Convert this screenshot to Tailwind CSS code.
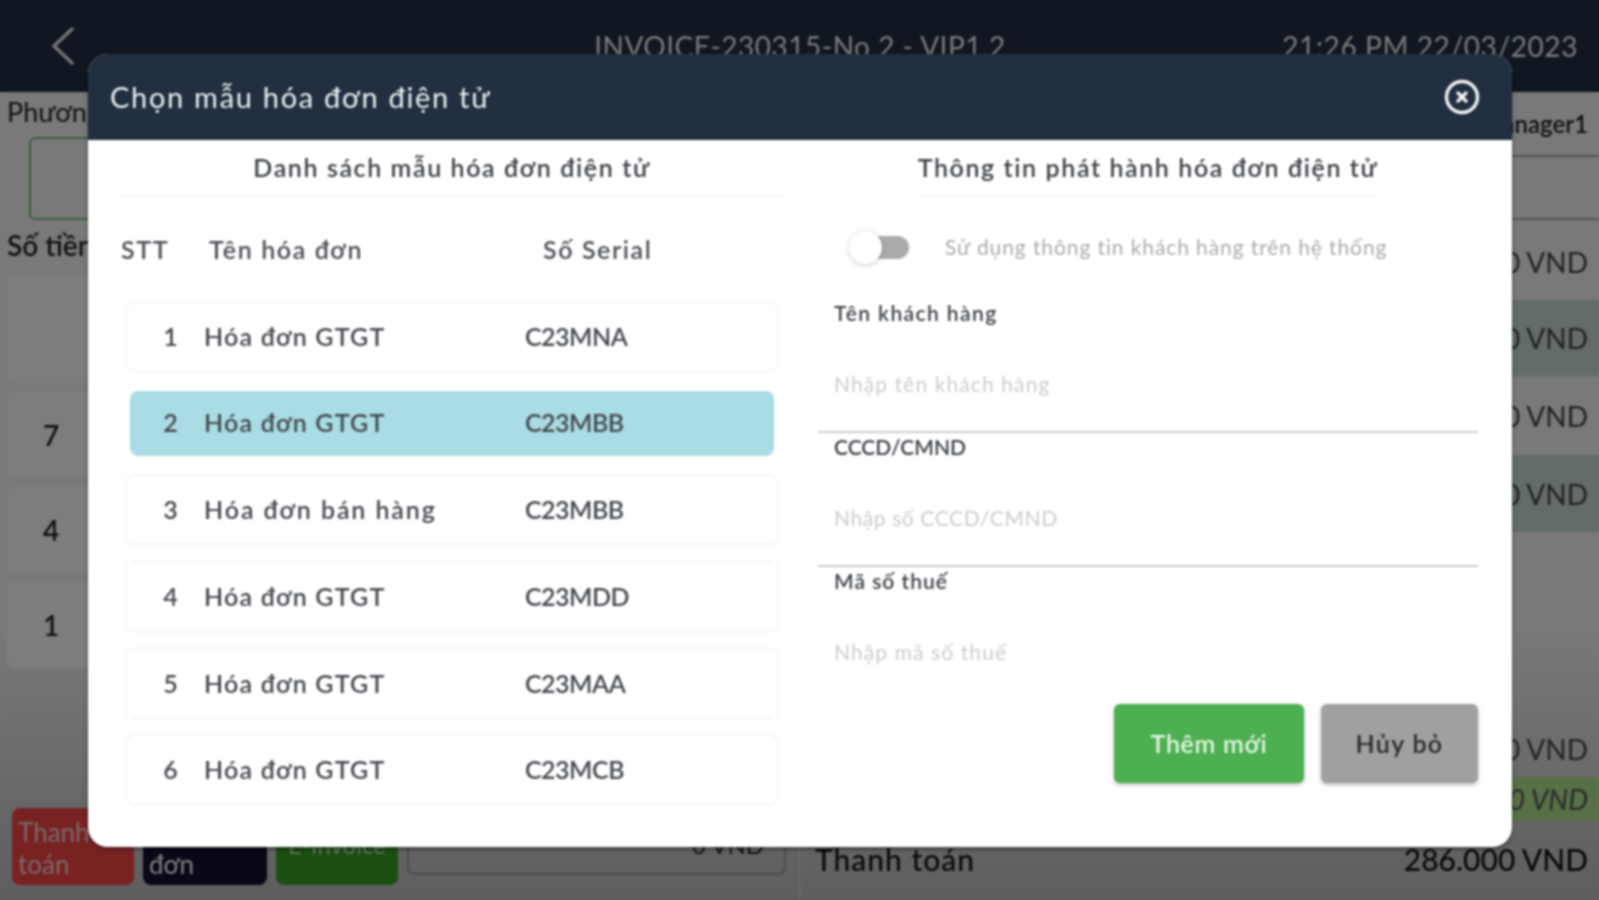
<!DOCTYPE html>
<html lang="vi">
<head>
<meta charset="utf-8">
<title>Chọn mẫu hóa đơn điện tử</title>
<script src="https://cdn.jsdelivr.net/npm/@tailwindcss/browser@4"></script>
</head>
<body class="m-0 overflow-hidden bg-[linear-gradient(#10161e_92px,#7a7a7a_92px,#7a7a7a_75%,#5e5e5e)]">
<div class="relative flex h-[900px] w-[1599px] flex-col overflow-hidden bg-gradient-to-b from-[#f2f2f2] from-[70%] to-[#bcbcbc] font-['Lato',sans-serif] text-[#222] blur-[0.9px]">
  <!-- app bar -->
  <header class="flex h-[92px] shrink-0 items-center bg-[#212f40] pl-[50px] pr-[21px] text-[28px] text-[#f2f2f2]">
    <div class="flex-1">
      <svg class="h-[38px] w-[26px]" viewBox="0 0 26 38" fill="none" stroke="#e8e8e8" stroke-width="3.5" stroke-linecap="round" stroke-linejoin="round"><path d="M22 2 4 19l18 17"/></svg>
    </div>
    <div class="mr-[28px] tracking-[0.5px]">INVOICE-230315-No 2 - VIP1.2</div>
    <div class="flex-1 text-right tracking-[0.6px]">21:26 PM 22/03/2023</div>
  </header>
  <main class="flex min-h-0 flex-1">
    <!-- left column -->
    <section class="flex w-[800px] shrink-0 flex-col border-r border-[#ddd] pl-[7px]">
      <div class="h-[45px] w-[81px] overflow-hidden whitespace-nowrap pt-[2px] text-[27px] leading-[36px]">Phương thức thanh toán</div>
      <div class="ml-[22px] h-[83px] w-[220px] rounded-md border-2 border-[#7fbf7f]"></div>
      <div class="h-[55px] w-[81px] overflow-hidden whitespace-nowrap text-[28px] font-semibold leading-[50px]">Số tiền</div>
      <div class="flex w-[100px] flex-col gap-[8px] text-[28px] font-semibold">
        <div class="h-[108px] rounded-lg bg-[#fafafa]"></div>
        <div class="flex h-[87px] items-center rounded-lg bg-[#fafafa] pl-[36px]">7</div>
        <div class="flex h-[87px] items-center rounded-lg bg-[#fafafa] pl-[36px]">4</div>
        <div class="flex h-[87px] items-center rounded-lg bg-[#fafafa] pl-[36px]">1</div>
      </div>
      <div class="mt-auto flex gap-[9px] pb-[15px] pl-[5px] text-[26px] leading-[32px]">
        <div class="h-[77px] w-[122px] rounded-lg bg-[#f04444] px-[6px] pt-[8px] text-[#f4d0d0]">Thanh toán</div>
        <div class="h-[77px] w-[124px] rounded-lg bg-[#10102c] px-[6px] pt-[8px] text-white">Hóa<br>đơn</div>
        <div class="flex h-[77px] w-[122px] justify-center rounded-lg bg-[#349e20] pt-[21px] text-[24px] text-[#cfe8c8]">E-Invoice</div>
        <div class="flex h-[67px] w-[379px] justify-end rounded-lg border-2 border-[#999] pr-[20px] pt-[19px] text-[24px]">0 VND</div>
      </div>
    </section>
    <!-- right column -->
    <section class="flex min-w-0 flex-1 flex-col text-[28px]">
      <div class="flex h-[65px] items-center justify-end border-b-2 border-[#aaa] pr-[11px] text-[24px] font-semibold">Manager1</div>
      <div class="h-[63px] border-b-2 border-[#aaa]"></div>
      <div class="mt-[3px] flex h-[77px] items-center justify-end pr-[11px] text-[#444]">0 VND</div>
      <div class="flex h-[76px] items-center justify-end bg-[#c6d6d6] pr-[11px] text-[#444]">0 VND</div>
      <div class="flex h-[79px] items-center justify-end pr-[11px] text-[#444]">0 VND</div>
      <div class="flex h-[77px] items-center justify-end bg-[#c6d6d6] pr-[11px] text-[#444]">0 VND</div>
      <div class="flex-1"></div>
      <div class="flex h-[65px] items-center justify-end pr-[11px] pt-[8px] text-[#444]">0 VND</div>
      <div class="flex h-[43px] items-center justify-end bg-[#aee08c] pr-[11px] italic text-[#555]">0 VND</div>
      <div class="flex h-[80px] items-start justify-between pl-[15px] pr-[11px] pt-[21px] text-[30px] font-medium leading-[36px] text-[#111]">
        <span class="tracking-[1px]">Thanh toán</span><span>286.000 VND</span>
      </div>
    </section>
  </main>
  <!-- scrim -->
  <div class="absolute inset-0 bg-black/50"></div>
  <!-- dialog -->
  <div class="absolute left-[88px] top-[54px] flex h-[793px] w-[1424px] flex-col overflow-hidden rounded-[20px] bg-white shadow-[0_2px_4px_rgba(0,0,0,0.4)]">
    <div class="flex h-[86px] shrink-0 items-center justify-between bg-[#212f40] pl-[22px] pr-[32px] text-[29px] tracking-[1.7px] text-[#eef1f4]">
      <span>Chọn mẫu hóa đơn điện tử</span>
      <svg class="h-[36px] w-[36px]" viewBox="0 0 36 36" fill="none" stroke="#f2f4f6" stroke-width="3.4" stroke-linecap="round"><circle cx="18" cy="18" r="15.5"/><path d="m14 14 8 8M22 14l-8 8"/></svg>
    </div>
    <div class="flex min-h-0 flex-1">
      <!-- template list -->
      <div class="w-[712px] shrink-0">
        <div class="ml-[34px] mr-[18px] flex h-[57px] items-center justify-center border-b-2 border-[#f6f6f6] text-[25px] font-semibold tracking-[1.6px] text-[#3c4046]">Danh sách mẫu hóa đơn điện tử</div>
        <div class="flex h-[106px] items-center pl-[33px] text-[25px] font-semibold tracking-[1.6px] text-[#4a4e54]">
          <span class="w-[88px]">STT</span><span class="w-[334px]">Tên hóa đơn</span><span>Số Serial</span>
        </div>
        <div class="ml-[39px] flex w-[650px] flex-col gap-[19.7px] text-[25px] font-semibold tracking-[1.2px] text-[#44484e]">
          <div class="flex h-[67px] items-center rounded-lg bg-white pl-[14px] shadow-[0_0_5px_rgba(0,0,0,0.09)]"><span class="mr-[3px] w-[60px] text-center">1</span><span class="w-[321px]">Hóa đơn GTGT</span><span class="tracking-[-0.5px]">C23MNA</span></div>
          <div class="mx-[3px] my-[1px] flex h-[65px] items-center rounded-lg bg-[#a9dce4] pl-[11px]"><span class="mr-[3px] w-[60px] text-center">2</span><span class="w-[321px]">Hóa đơn GTGT</span><span class="tracking-[-0.5px]">C23MBB</span></div>
          <div class="flex h-[67px] items-center rounded-lg bg-white pl-[14px] shadow-[0_0_5px_rgba(0,0,0,0.09)]"><span class="mr-[3px] w-[60px] text-center">3</span><span class="w-[321px] tracking-[1.9px]">Hóa đơn bán hàng</span><span class="tracking-[-0.5px]">C23MBB</span></div>
          <div class="flex h-[67px] items-center rounded-lg bg-white pl-[14px] shadow-[0_0_5px_rgba(0,0,0,0.09)]"><span class="mr-[3px] w-[60px] text-center">4</span><span class="w-[321px]">Hóa đơn GTGT</span><span class="tracking-[-0.5px]">C23MDD</span></div>
          <div class="flex h-[67px] items-center rounded-lg bg-white pl-[14px] shadow-[0_0_5px_rgba(0,0,0,0.09)]"><span class="mr-[3px] w-[60px] text-center">5</span><span class="w-[321px]">Hóa đơn GTGT</span><span class="tracking-[-0.5px]">C23MAA</span></div>
          <div class="flex h-[67px] items-center rounded-lg bg-white pl-[14px] shadow-[0_0_5px_rgba(0,0,0,0.09)]"><span class="mr-[3px] w-[60px] text-center">6</span><span class="w-[321px]">Hóa đơn GTGT</span><span class="tracking-[-0.5px]">C23MCB</span></div>
        </div>
      </div>
      <!-- issue info -->
      <div class="ml-[18px] flex w-[660px] flex-col">
        <div class="mx-auto flex h-[57px] w-[455px] items-center justify-center whitespace-nowrap border-b-2 border-[#f6f6f6] text-[25px] font-semibold tracking-[1.6px] text-[#3c4046]">Thông tin phát hành hóa đơn điện tử</div>
        <div class="flex h-[104px] items-center pb-[4px] pl-[47px]">
          <div class="relative h-[23px] w-[44px] rounded-full bg-[#ababab]">
            <div class="absolute left-[-16px] top-[-5px] h-[33px] w-[33px] rounded-full bg-white shadow-[0_1px_5px_rgba(0,0,0,0.22)]"></div>
          </div>
          <span class="ml-[36px] text-[21px] tracking-[0.9px] text-[#aaa]">Sử dụng thông tin khách hàng trên hệ thống</span>
        </div>
        <label class="block">
          <span class="block pl-[16px] text-[21px] font-semibold leading-[24px] tracking-[1.4px] text-[#3c4046]">Tên khách hàng</span>
          <input class="block h-[108px] w-full border-b-2 border-[#ccc] pl-[16px] pt-[10px] text-[21px] tracking-[1.1px] outline-none placeholder:text-[#ccc]" placeholder="Nhập tên khách hàng">
        </label>
        <label class="block pt-[2px]">
          <span class="block pl-[16px] text-[21px] font-semibold leading-[24px] text-[#3c4046]">CCCD/CMND</span>
          <input class="block h-[108px] w-full border-b-2 border-[#ccc] pl-[16px] pt-[10px] text-[21px] tracking-[0.6px] outline-none placeholder:text-[#ccc]" placeholder="Nhập số CCCD/CMND">
        </label>
        <label class="block pt-[2px]">
          <span class="block pl-[16px] text-[21px] font-semibold leading-[24px] tracking-[1px] text-[#3c4046]">Mã số thuế</span>
          <input class="block h-[108px] w-full pl-[16px] pt-[8px] text-[21px] tracking-[1.1px] outline-none placeholder:text-[#ccc]" placeholder="Nhập mã số thuế">
        </label>
        <div class="mt-[3px] flex justify-end gap-[17px] text-[25px] font-semibold">
          <button class="h-[79px] w-[190px] rounded-md bg-[#4caf50] tracking-[0.7px] text-[#e8f6e8] shadow-[0_2px_4px_rgba(0,0,0,0.25)]">Thêm mới</button>
          <button class="h-[79px] w-[157px] rounded-md bg-[#a0a0a0] tracking-[1.3px] text-[#2a2a2a] shadow-[0_2px_4px_rgba(0,0,0,0.25)]">Hủy bỏ</button>
        </div>
      </div>
    </div>
  </div>
</div>
</body>
</html>
